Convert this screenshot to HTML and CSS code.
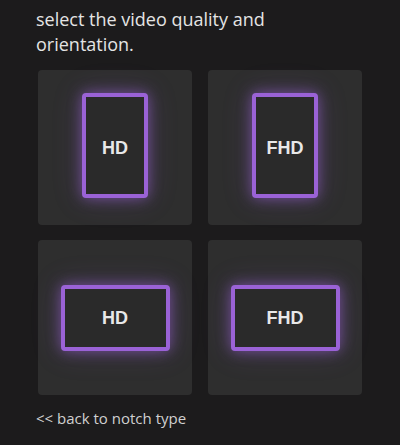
FILE: index.html
```html
<!DOCTYPE html>
<html lang="en">
<head>
  <meta charset="UTF-8" />
  <meta name="viewport" content="width=device-width, initial-scale=1.0" />
  <title>Video quality</title>
  <link rel="stylesheet" href="styles.css">
</head>
<body>
  <div class="panel">
    <p class="intro">select the video quality and orientation.</p>
    <div class="quality-grid">
      <div class="quality-card">
        <div class="frame portrait">HD</div>
      </div>
      <div class="quality-card">
        <div class="frame portrait">FHD</div>
      </div>
      <div class="quality-card">
        <div class="frame landscape">HD</div>
      </div>
      <div class="quality-card">
        <div class="frame landscape">FHD</div>
      </div>
    </div>
    <a class="back-link" href="#">&lt;&lt; back to notch type</a>
  </div>
</body>
</html>
```

FILE: styles.css
```css
:root {
  --page-bg: #1c1b1c;
  --card-bg: #2e2e2e;
  --frame-bg: #2a2a2a;
  --accent: #9a62d6;
  --text: #e4e4e4;
}

* {
  box-sizing: border-box;
  margin: 0;
  padding: 0;
}

html, body {
  height: 100%;
  background-color: var(--page-bg);
  overflow: hidden;
}

.panel {
  padding: 7px 38px 0 36px;
  font-family: "Open Sans", "Noto Sans", sans-serif;
  color: var(--text);
}

.intro {
  font-size: 18px;
  line-height: 25px;
  width: 250px;
}

.quality-grid {
  display: grid;
  grid-template-columns: 154px 154px;
  grid-auto-rows: 155px;
  column-gap: 16px;
  row-gap: 15px;
  margin: 13px 0 0 2px;
}

.quality-card {
  background-color: var(--card-bg);
  border-radius: 4px;
  display: flex;
  align-items: center;
  justify-content: center;
}

.frame {
  display: flex;
  align-items: center;
  justify-content: center;
  background-color: var(--frame-bg);
  border: 4px solid var(--accent);
  border-radius: 4px;
  box-shadow: 0 0 14px rgba(154, 98, 214, 0.6), 0 0 30px rgba(154, 98, 214, 0.22);
  font-family: "Liberation Sans", Arial, sans-serif;
  font-weight: bold;
  font-size: 18px;
  color: #e8e8e8;
}

.frame.portrait {
  width: 66px;
  height: 105px;
  margin-top: -4px;
  padding-top: 6px;
}

.frame.landscape {
  width: 109px;
  height: 66px;
  padding-top: 2px;
}

.back-link {
  display: block;
  margin-top: 13px;
  font-size: 15px;
  color: #d0d0d0;
  text-decoration: none;
}
```
